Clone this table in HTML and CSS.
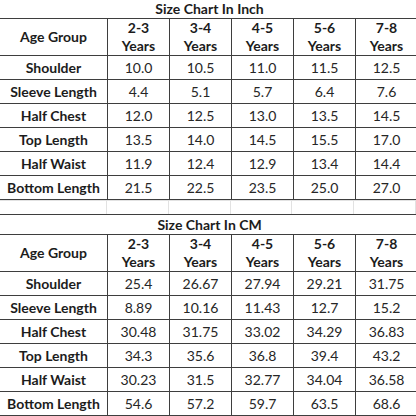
FILE: index.html
```html
<!DOCTYPE html>
<html lang="en">
<head>
  <meta charset="UTF-8">
  <meta name="viewport" content="width=device-width, initial-scale=1.0">
  <title>Size Chart</title>
  <link rel="stylesheet" href="styles.css">
</head>
<body>
  <table class="chart chart-inch">
    <colgroup>
      <col class="c-label"><col class="c-a"><col class="c-a"><col class="c-b"><col class="c-a"><col class="c-b">
    </colgroup>
    <tr class="title"><th colspan="6">Size Chart In Inch</th></tr>
    <tr class="head">
      <th>Age Group</th>
      <th>2-3<br>Years</th>
      <th>3-4<br>Years</th>
      <th>4-5<br>Years</th>
      <th>5-6<br>Years</th>
      <th>7-8<br>Years</th>
    </tr>
    <tr><th>Shoulder</th><td>10.0</td><td>10.5</td><td>11.0</td><td>11.5</td><td>12.5</td></tr>
    <tr><th>Sleeve Length</th><td>4.4</td><td>5.1</td><td>5.7</td><td>6.4</td><td>7.6</td></tr>
    <tr><th>Half Chest</th><td>12.0</td><td>12.5</td><td>13.0</td><td>13.5</td><td>14.5</td></tr>
    <tr><th>Top Length</th><td>13.5</td><td>14.0</td><td>14.5</td><td>15.5</td><td>17.0</td></tr>
    <tr><th>Half Waist</th><td>11.9</td><td>12.4</td><td>12.9</td><td>13.4</td><td>14.4</td></tr>
    <tr><th>Bottom Length</th><td>21.5</td><td>22.5</td><td>23.5</td><td>25.0</td><td>27.0</td></tr>
  </table>

  <div class="gap">
    <span></span><span></span><span></span><span></span><span></span><span></span>
  </div>

  <table class="chart chart-cm">
    <colgroup>
      <col class="c-label"><col class="c-a"><col class="c-a"><col class="c-b"><col class="c-a"><col class="c-b">
    </colgroup>
    <tr class="title"><th colspan="6">Size Chart In CM</th></tr>
    <tr class="head">
      <th>Age Group</th>
      <th>2-3<br>Years</th>
      <th>3-4<br>Years</th>
      <th>4-5<br>Years</th>
      <th>5-6<br>Years</th>
      <th>7-8<br>Years</th>
    </tr>
    <tr><th>Shoulder</th><td>25.4</td><td>26.67</td><td>27.94</td><td>29.21</td><td>31.75</td></tr>
    <tr><th>Sleeve Length</th><td>8.89</td><td>10.16</td><td>11.43</td><td>12.7</td><td>15.2</td></tr>
    <tr><th>Half Chest</th><td>30.48</td><td>31.75</td><td>33.02</td><td>34.29</td><td>36.83</td></tr>
    <tr><th>Top Length</th><td>34.3</td><td>35.6</td><td>36.8</td><td>39.4</td><td>43.2</td></tr>
    <tr><th>Half Waist</th><td>30.23</td><td>31.5</td><td>32.77</td><td>34.04</td><td>36.58</td></tr>
    <tr><th>Bottom Length</th><td>54.6</td><td>57.2</td><td>59.7</td><td>63.5</td><td>68.6</td></tr>
  </table>
</body>
</html>
```

FILE: styles.css
```css
* {
  box-sizing: border-box;
}
body {
  margin: 0;
  background: #fff;
  font-family: Lato, "Open Sans", sans-serif;
  color: #1c1c1c;
  overflow: hidden;
}
.chart {
  border-collapse: collapse;
  table-layout: fixed;
  width: 418px;
  margin-left: -1px;
  font-size: 14px;
}
.chart-inch {
  margin-top: -2px;
}
.c-label {
  width: 108px;
}
.c-a {
  width: 62px;
}
.c-b {
  width: 62px;
}
.chart th, .chart td {
  border: 1px solid #3e3e3e;
  padding: 0;
  text-align: center;
  height: 24px;
  line-height: 18px;
}
.chart th {
  font-weight: 700;
}
.chart td {
  font-weight: 400;
  color: #262626;
}
.chart .title th {
  height: 20px;
  line-height: 18px;
  padding-left: 2px;
}
.chart .head th {
  height: 37px;
}
.gap {
  display: grid;
  grid-template-columns: 107px 62px 62px 61px 62px 62px;
  height: 14px;
  border-top: 1px solid #e2e2e2;
}
.gap span {
  border-right: 1px solid #e2e2e2;
}
```
